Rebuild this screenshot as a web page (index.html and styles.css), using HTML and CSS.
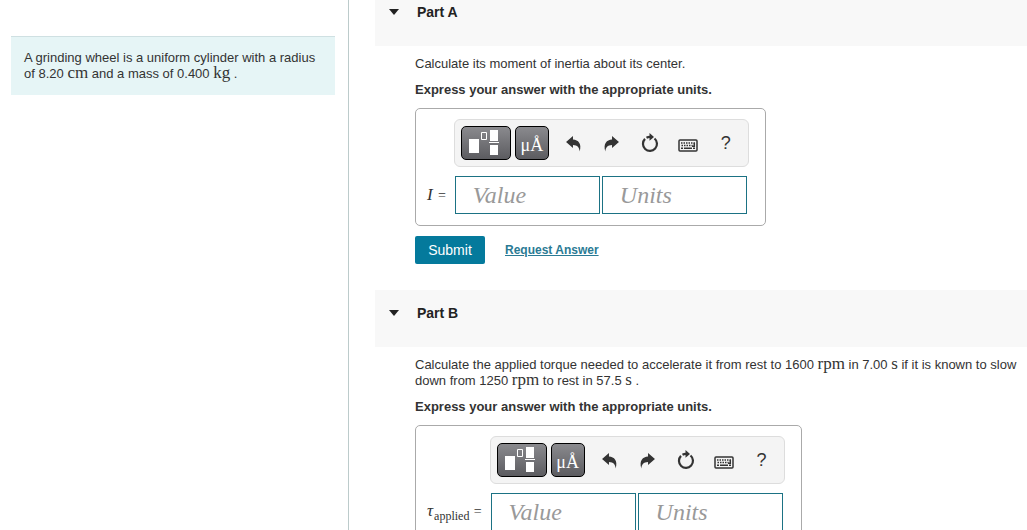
FILE: index.html
```html
<!DOCTYPE html>
<html lang="en">
<head>
    <meta charset="utf-8">
    <title>Grinding wheel</title>
    <link rel="stylesheet" href="styles.css">
</head>

<body>
    <!-- shared toolbar icons -->
    <svg class="sprite" aria-hidden="true">
        <symbol id="icon-template" viewBox="0 0 34 26">
            <path fill="#fff" d="M0 9h10v14H0zM21 0h8v11h-8zM21 15h8v10h-8zM20 12h10v1H20z"/>
            <path fill="none" stroke="#fff" d="M12.500 2.500h5v7h-5z"/>
        </symbol>
        <symbol id="icon-undo" viewBox="0 0 16 16">
            <path d="M1 6.500L7.500 1v3.200c5 .3 8.500 3.800 6.300 11.300C13.500 11.500 11.800 9.500 7.500 9.300v3z"/>
        </symbol>
        <symbol id="icon-redo" viewBox="0 0 16 16">
            <path d="M15 6.500L8.500 1v3.200c-5 .3-8.500 3.800-6.300 11.300C2.500 11.500 4.200 9.500 8.500 9.300v3z"/>
        </symbol>
        <symbol id="icon-reset" viewBox="0 0 18 20">
            <path fill="none" stroke="currentColor" stroke-width="2.2" d="M13.500 5.500A7 7 0 1 1 4 5.900M5.500 4.800A7 7 0 0 1 9.500 4"/>
            <path d="M8.500 0l4.500 3.900-4.500 3.900z"/>
        </symbol>
        <symbol id="icon-keyboard" viewBox="0 0 20 13">
            <rect x="1" y="1" width="18" height="11" rx="1" fill="none" stroke="currentColor" stroke-width="1.5"/>
            <path fill="none" stroke="currentColor" stroke-width="1.5" stroke-dasharray="1.5 1" d="M3 4h14M3.500 6.500h11"/>
            <path fill="none" stroke="currentColor" stroke-width="1.5" d="M3 9.300h2M6 9.300h8M15 9.300h2M16.300 4v3.200H14"/>
        </symbol>
    </svg>

    <div class="page">
        <aside class="side">
            <p class="intro">A grinding wheel is a uniform cylinder with a radius of 8.20 <span class="unit">cm</span> and a mass of 0.400 <span class="unit">kg</span> .</p>
        </aside>

        <main class="parts">
            <section class="part">
                <h2 class="part-head part-head-first"><button class="part-toggle" type="button"><span class="caret"></span>Part A</button></h2>
                <div class="part-body">
                    <p class="question">Calculate its moment of inertia about its center.</p>
                    <p class="hint">Express your answer with the appropriate units.</p>
                    <form class="answer">
                        <div class="toolbar">
                            <button class="tool-dark tool-wide" type="button" aria-label="Templates"><svg width="34" height="26"><use href="#icon-template"/></svg></button>
                            <button class="tool-dark tool-units" type="button">μÅ</button>
                            <button class="tool" type="button" aria-label="Undo"><svg width="17" height="17"><use href="#icon-undo"/></svg></button>
                            <button class="tool" type="button" aria-label="Redo"><svg width="17" height="17"><use href="#icon-redo"/></svg></button>
                            <button class="tool" type="button" aria-label="Reset"><svg width="18" height="20"><use href="#icon-reset"/></svg></button>
                            <button class="tool tool-keys" type="button" aria-label="Keyboard"><svg width="20" height="13"><use href="#icon-keyboard"/></svg></button>
                            <button class="tool" type="button">?</button>
                        </div>
                        <label class="symbol" for="value-a"><i>I</i> <span class="equals">=</span></label>
                        <div class="fields">
                            <input class="field" id="value-a" type="text" placeholder="Value">
                            <input class="field" type="text" placeholder="Units" aria-label="Units">
                        </div>
                    </form>
                    <div class="actions">
                        <button class="submit" type="button">Submit</button>
                        <a class="request" href="#">Request Answer</a>
                    </div>
                </div>
            </section>

            <section class="part">
                <h2 class="part-head"><button class="part-toggle" type="button"><span class="caret"></span>Part B</button></h2>
                <div class="part-body">
                    <p class="question">Calculate the applied torque needed to accelerate it from rest to 1600 <span class="unit">rpm</span> in 7.00 <span class="unit">s</span> if it is known to slow down from 1250 <span class="unit">rpm</span> to rest in 57.5 <span class="unit">s</span> .</p>
                    <p class="hint">Express your answer with the appropriate units.</p>
                    <form class="answer">
                        <div class="toolbar">
                            <button class="tool-dark tool-wide" type="button" aria-label="Templates"><svg width="34" height="26"><use href="#icon-template"/></svg></button>
                            <button class="tool-dark tool-units" type="button">μÅ</button>
                            <button class="tool" type="button" aria-label="Undo"><svg width="17" height="17"><use href="#icon-undo"/></svg></button>
                            <button class="tool" type="button" aria-label="Redo"><svg width="17" height="17"><use href="#icon-redo"/></svg></button>
                            <button class="tool" type="button" aria-label="Reset"><svg width="18" height="20"><use href="#icon-reset"/></svg></button>
                            <button class="tool tool-keys" type="button" aria-label="Keyboard"><svg width="20" height="13"><use href="#icon-keyboard"/></svg></button>
                            <button class="tool" type="button">?</button>
                        </div>
                        <label class="symbol" for="value-b"><i>τ</i><sub>applied</sub> <span class="equals">=</span></label>
                        <div class="fields">
                            <input class="field" id="value-b" type="text" placeholder="Value">
                            <input class="field" type="text" placeholder="Units" aria-label="Units">
                        </div>
                    </form>
                </div>
            </section>
        </main>
    </div>
</body>
</html>
```

FILE: styles.css
```css
* { box-sizing: border-box; margin: 0; padding: 0; }
body {
    font: 13px/16px "Liberation Sans", Arial, sans-serif;
    color: #333;
    background: #fff;
}
button, input { font-family: inherit; }
button { border: 0; background: none; color: inherit; }
.sprite { display: none; }

.page {
    display: flex;
    height: 100vh;
    overflow: hidden;
}
.side {
    flex: 0 0 349px;
    padding: 36px 13px 0 11px;
    border-right: 1px solid #bccbcb;
}
.intro {
    padding: 13px;
    border-top: 1px solid #cfe0e2;
    background: #e6f5f6;
}
.unit { font: 17px/14px "Liberation Serif", serif; }

.parts { flex: 1; padding-left: 26px; }
.part-head {
    height: 57px;
    padding: 15px 14px 0;
    background: #f8f8f8;
}
.part-head-first { height: 46px; padding-top: 4px; }
.part-toggle {
    display: flex;
    align-items: center;
    gap: 18px;
    font-size: 14px;
    line-height: 16px;
    font-weight: bold;
    color: #222;
}
.caret {
    border: 5px solid transparent;
    border-top: 6px solid #222;
    border-bottom: 0;
}
.part-body { padding: 10px 0 26px 40px; }
.hint { margin: 10px 0; font-weight: bold; }

.answer {
    display: inline-grid;
    grid-template-columns: auto auto;
    row-gap: 9px;
    padding: 10px 16px 11px 11px;
    border: 1px solid #aaa;
    border-radius: 5px;
    vertical-align: top;
}
.toolbar {
    grid-column: 2;
    display: flex;
    align-items: center;
    gap: 4px;
    width: 295px;
    height: 48px;
    padding-left: 6px;
    border: 1px solid #ddd;
    border-radius: 6px;
    background: #f4f4f4;
}
.tool-dark {
    display: flex;
    align-items: center;
    justify-content: center;
    width: 34px;
    height: 34px;
    border: 1px solid #000;
    border-radius: 5px;
    background: linear-gradient(#8a8a8e, #5c5c60);
    color: #fff;
}
.tool-wide { width: 50px; }
.tool-units {
    margin-right: 4px;
    padding-top: 4px;
    font: 18px "Liberation Serif", serif;
}
.tool {
    display: flex;
    align-items: center;
    justify-content: center;
    width: 34px;
    height: 34px;
    color: #333;
    font-size: 18px;
}
.tool-keys { padding-top: 4px; }
.tool svg { fill: currentColor; }

.symbol {
    align-self: center;
    padding-right: 8px;
    font: 17px/20px "Liberation Serif", serif;
}
.symbol i { padding-right: 1px; }
.symbol sub { font-size: 12px; line-height: 12px; }
.equals { font-size: 14px; }
.fields { display: flex; gap: 2px; padding-left: 1px; }
.field {
    width: 145px;
    height: 38px;
    padding: 0 17px;
    border: 1px solid #1b7284;
    background: #fff;
    font: italic 24px "Liberation Serif", serif;
}
.field::placeholder { color: #999; }

.actions {
    display: flex;
    align-items: center;
    gap: 20px;
    margin-top: 10px;
}
.submit {
    width: 70px;
    height: 28px;
    border-radius: 2px;
    background: #047a9c;
    color: #fff;
    font-size: 14px;
}
.request {
    font-size: 12px;
    font-weight: bold;
    color: #2a7a94;
}
```
